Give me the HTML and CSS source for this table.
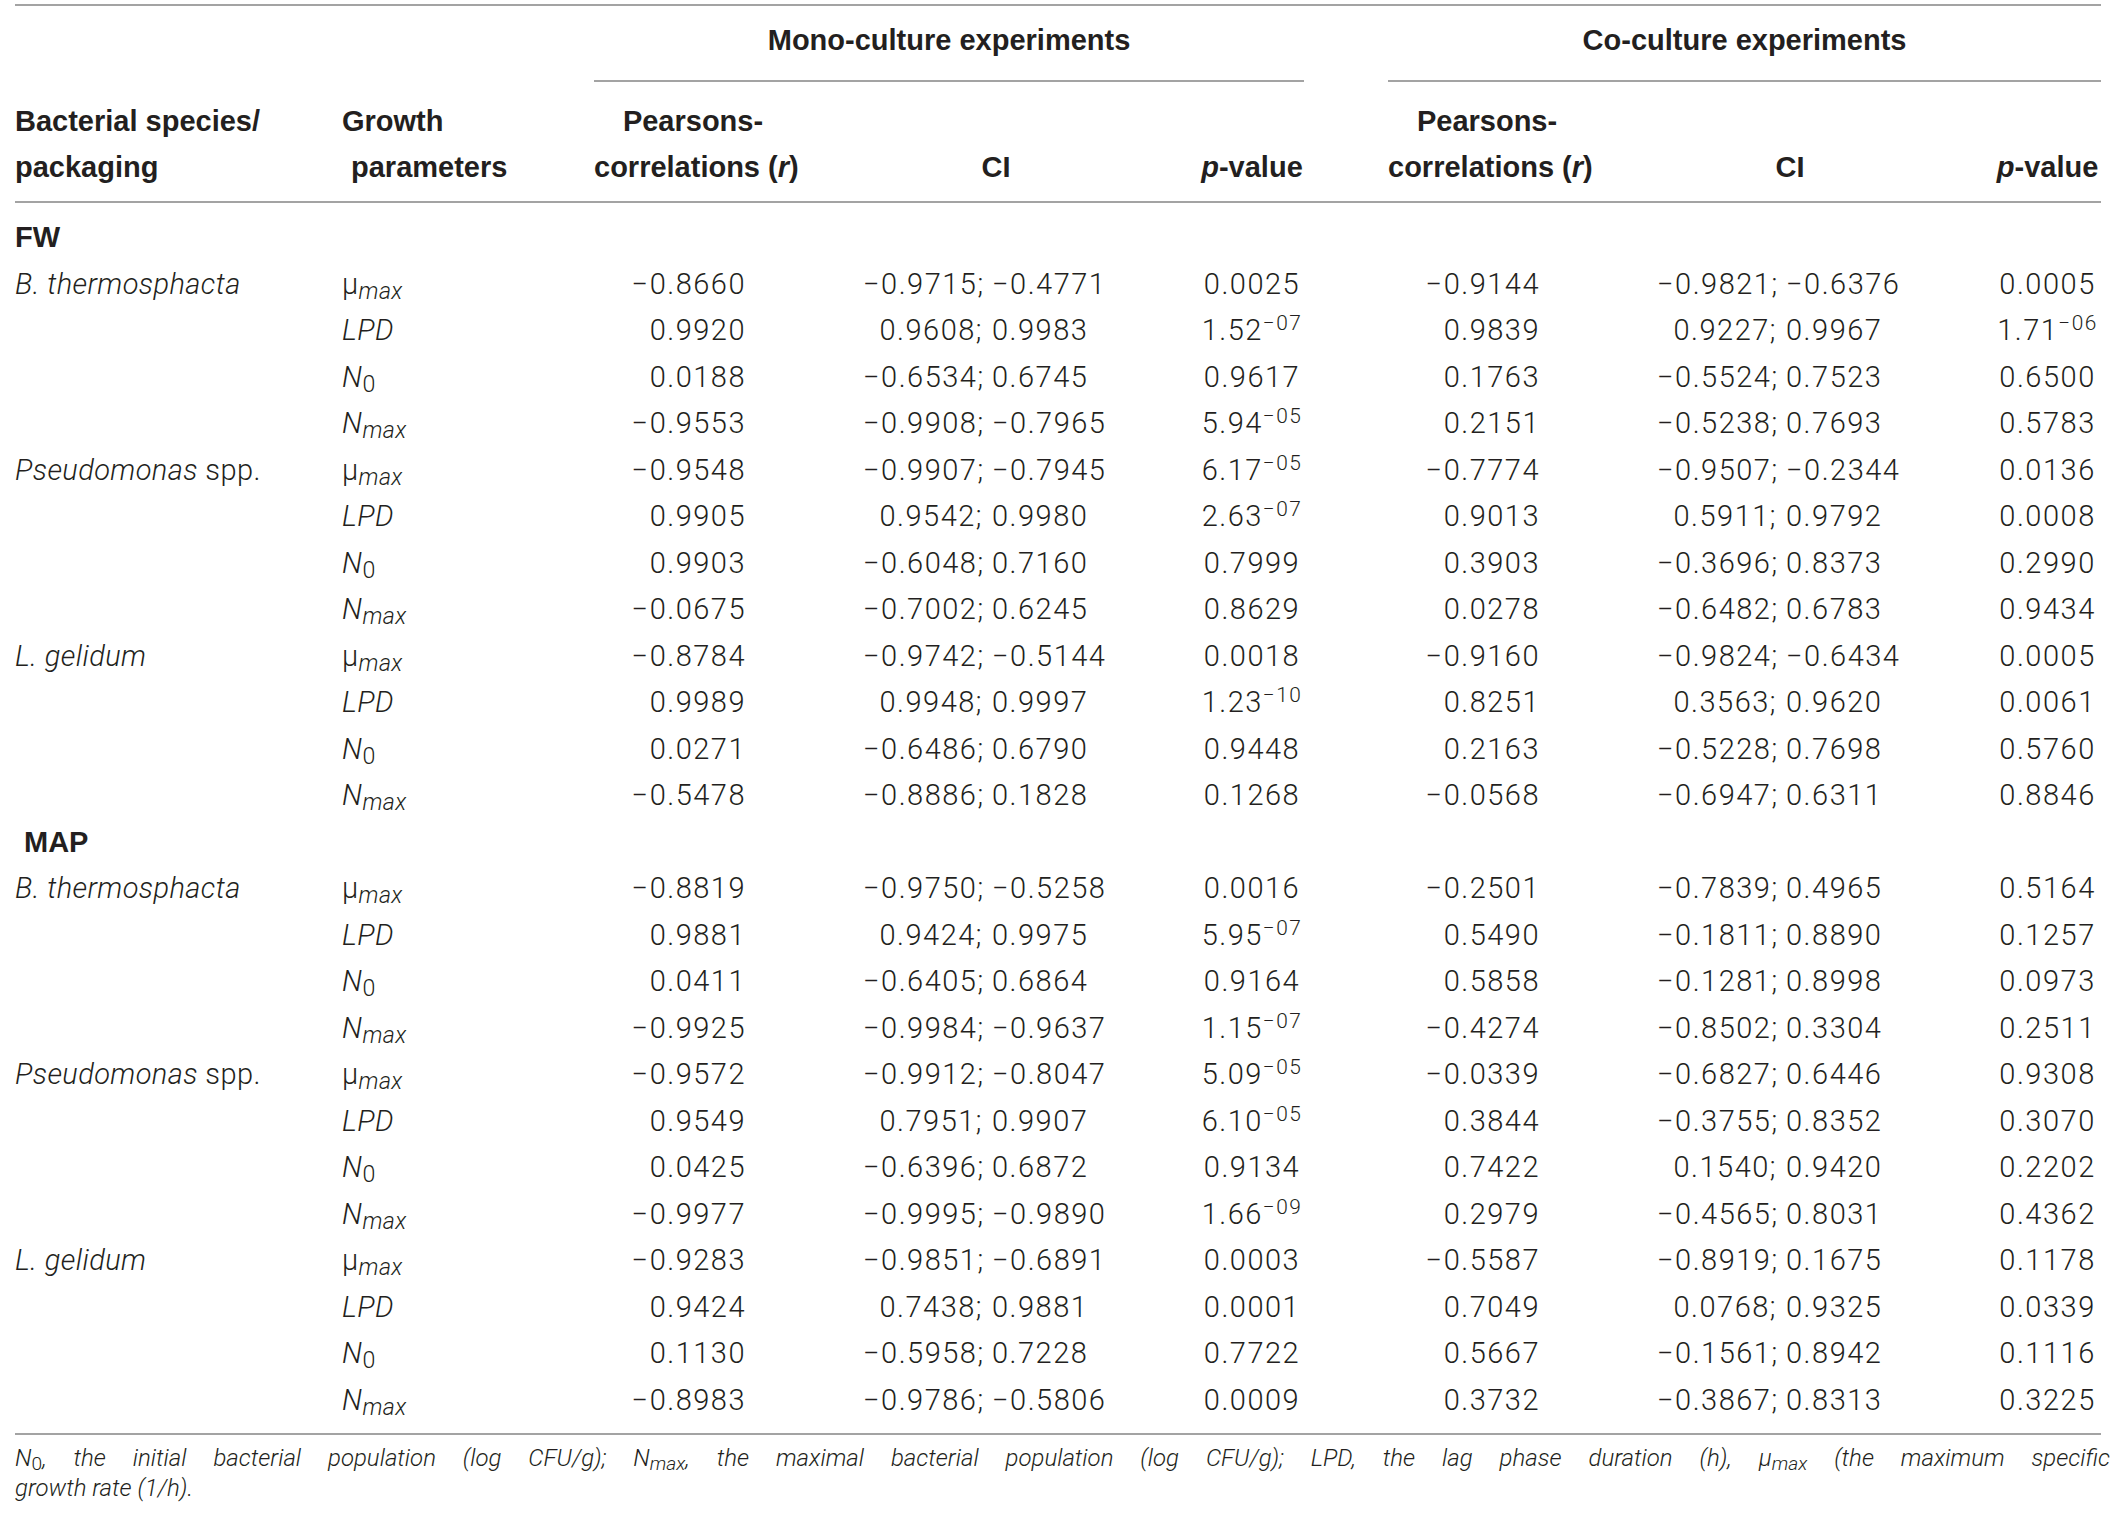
FILE: index.html
```html
<!DOCTYPE html>
<html lang="en">
<head>
<meta charset="utf-8">
<title>Pearson correlations</title>
<link rel="stylesheet" href="styles.css">
</head>
<body>
<div class="wrap">
<table class="tbl">
<colgroup>
<col class="w-sp"><col class="w-gp"><col class="w-r"><col class="w-ci"><col class="w-p1"><col class="w-gap"><col class="w-r"><col class="w-ci"><col class="w-p2">
</colgroup>
<thead>
<tr class="h1">
<th rowspan="2" class="hsp">Bacterial species/<br>packaging</th>
<th rowspan="2" class="hgp">Growth<br><span class="ind">parameters</span></th>
<th colspan="3" class="grp">Mono-culture experiments</th>
<th rowspan="2" class="hgap"></th>
<th colspan="3" class="grp">Co-culture experiments</th>
</tr>
<tr class="h2">
<th class="hc">Pearsons-<br>correlations (<i>r</i>)</th>
<th class="hc">CI</th>
<th class="hc"><i>p</i>-value</th>
<th class="hc">Pearsons-<br>correlations (<i>r</i>)</th>
<th class="hc">CI</th>
<th class="hc"><i>p</i>-value</th>
</tr>
</thead>
<tbody>
<tr class="sec first"><td class="secname" colspan="9">FW</td></tr>
<tr><td class="sp"><i>B. thermosphacta</i></td><td class="gp">μ<sub><i>max</i></sub></td><td class="r">−0.8660</td><td class="ci"><span class="cl">−0.9715;</span><span class="cr">−0.4771</span></td><td class="p">0.0025</td><td></td><td class="r">−0.9144</td><td class="ci"><span class="cl">−0.9821;</span><span class="cr">−0.6376</span></td><td class="p">0.0005</td></tr>
<tr><td class="sp"></td><td class="gp"><i>LPD</i></td><td class="r">0.9920</td><td class="ci"><span class="cl">0.9608;</span><span class="cr">0.9983</span></td><td class="p">1.52<sup>−07</sup></td><td></td><td class="r">0.9839</td><td class="ci"><span class="cl">0.9227;</span><span class="cr">0.9967</span></td><td class="p">1.71<sup>−06</sup></td></tr>
<tr><td class="sp"></td><td class="gp"><i>N</i><sub>0</sub></td><td class="r">0.0188</td><td class="ci"><span class="cl">−0.6534;</span><span class="cr">0.6745</span></td><td class="p">0.9617</td><td></td><td class="r">0.1763</td><td class="ci"><span class="cl">−0.5524;</span><span class="cr">0.7523</span></td><td class="p">0.6500</td></tr>
<tr><td class="sp"></td><td class="gp"><i>N<sub>max</sub></i></td><td class="r">−0.9553</td><td class="ci"><span class="cl">−0.9908;</span><span class="cr">−0.7965</span></td><td class="p">5.94<sup>−05</sup></td><td></td><td class="r">0.2151</td><td class="ci"><span class="cl">−0.5238;</span><span class="cr">0.7693</span></td><td class="p">0.5783</td></tr>
<tr><td class="sp"><i>Pseudomonas</i> spp.</td><td class="gp">μ<sub><i>max</i></sub></td><td class="r">−0.9548</td><td class="ci"><span class="cl">−0.9907;</span><span class="cr">−0.7945</span></td><td class="p">6.17<sup>−05</sup></td><td></td><td class="r">−0.7774</td><td class="ci"><span class="cl">−0.9507;</span><span class="cr">−0.2344</span></td><td class="p">0.0136</td></tr>
<tr><td class="sp"></td><td class="gp"><i>LPD</i></td><td class="r">0.9905</td><td class="ci"><span class="cl">0.9542;</span><span class="cr">0.9980</span></td><td class="p">2.63<sup>−07</sup></td><td></td><td class="r">0.9013</td><td class="ci"><span class="cl">0.5911;</span><span class="cr">0.9792</span></td><td class="p">0.0008</td></tr>
<tr><td class="sp"></td><td class="gp"><i>N</i><sub>0</sub></td><td class="r">0.9903</td><td class="ci"><span class="cl">−0.6048;</span><span class="cr">0.7160</span></td><td class="p">0.7999</td><td></td><td class="r">0.3903</td><td class="ci"><span class="cl">−0.3696;</span><span class="cr">0.8373</span></td><td class="p">0.2990</td></tr>
<tr><td class="sp"></td><td class="gp"><i>N<sub>max</sub></i></td><td class="r">−0.0675</td><td class="ci"><span class="cl">−0.7002;</span><span class="cr">0.6245</span></td><td class="p">0.8629</td><td></td><td class="r">0.0278</td><td class="ci"><span class="cl">−0.6482;</span><span class="cr">0.6783</span></td><td class="p">0.9434</td></tr>
<tr><td class="sp"><i>L. gelidum</i></td><td class="gp">μ<sub><i>max</i></sub></td><td class="r">−0.8784</td><td class="ci"><span class="cl">−0.9742;</span><span class="cr">−0.5144</span></td><td class="p">0.0018</td><td></td><td class="r">−0.9160</td><td class="ci"><span class="cl">−0.9824;</span><span class="cr">−0.6434</span></td><td class="p">0.0005</td></tr>
<tr><td class="sp"></td><td class="gp"><i>LPD</i></td><td class="r">0.9989</td><td class="ci"><span class="cl">0.9948;</span><span class="cr">0.9997</span></td><td class="p">1.23<sup>−10</sup></td><td></td><td class="r">0.8251</td><td class="ci"><span class="cl">0.3563;</span><span class="cr">0.9620</span></td><td class="p">0.0061</td></tr>
<tr><td class="sp"></td><td class="gp"><i>N</i><sub>0</sub></td><td class="r">0.0271</td><td class="ci"><span class="cl">−0.6486;</span><span class="cr">0.6790</span></td><td class="p">0.9448</td><td></td><td class="r">0.2163</td><td class="ci"><span class="cl">−0.5228;</span><span class="cr">0.7698</span></td><td class="p">0.5760</td></tr>
<tr><td class="sp"></td><td class="gp"><i>N<sub>max</sub></i></td><td class="r">−0.5478</td><td class="ci"><span class="cl">−0.8886;</span><span class="cr">0.1828</span></td><td class="p">0.1268</td><td></td><td class="r">−0.0568</td><td class="ci"><span class="cl">−0.6947;</span><span class="cr">0.6311</span></td><td class="p">0.8846</td></tr>
<tr class="sec"><td class="secname map" colspan="9">MAP</td></tr>
<tr><td class="sp"><i>B. thermosphacta</i></td><td class="gp">μ<sub><i>max</i></sub></td><td class="r">−0.8819</td><td class="ci"><span class="cl">−0.9750;</span><span class="cr">−0.5258</span></td><td class="p">0.0016</td><td></td><td class="r">−0.2501</td><td class="ci"><span class="cl">−0.7839;</span><span class="cr">0.4965</span></td><td class="p">0.5164</td></tr>
<tr><td class="sp"></td><td class="gp"><i>LPD</i></td><td class="r">0.9881</td><td class="ci"><span class="cl">0.9424;</span><span class="cr">0.9975</span></td><td class="p">5.95<sup>−07</sup></td><td></td><td class="r">0.5490</td><td class="ci"><span class="cl">−0.1811;</span><span class="cr">0.8890</span></td><td class="p">0.1257</td></tr>
<tr><td class="sp"></td><td class="gp"><i>N</i><sub>0</sub></td><td class="r">0.0411</td><td class="ci"><span class="cl">−0.6405;</span><span class="cr">0.6864</span></td><td class="p">0.9164</td><td></td><td class="r">0.5858</td><td class="ci"><span class="cl">−0.1281;</span><span class="cr">0.8998</span></td><td class="p">0.0973</td></tr>
<tr><td class="sp"></td><td class="gp"><i>N<sub>max</sub></i></td><td class="r">−0.9925</td><td class="ci"><span class="cl">−0.9984;</span><span class="cr">−0.9637</span></td><td class="p">1.15<sup>−07</sup></td><td></td><td class="r">−0.4274</td><td class="ci"><span class="cl">−0.8502;</span><span class="cr">0.3304</span></td><td class="p">0.2511</td></tr>
<tr><td class="sp"><i>Pseudomonas</i> spp.</td><td class="gp">μ<sub><i>max</i></sub></td><td class="r">−0.9572</td><td class="ci"><span class="cl">−0.9912;</span><span class="cr">−0.8047</span></td><td class="p">5.09<sup>−05</sup></td><td></td><td class="r">−0.0339</td><td class="ci"><span class="cl">−0.6827;</span><span class="cr">0.6446</span></td><td class="p">0.9308</td></tr>
<tr><td class="sp"></td><td class="gp"><i>LPD</i></td><td class="r">0.9549</td><td class="ci"><span class="cl">0.7951;</span><span class="cr">0.9907</span></td><td class="p">6.10<sup>−05</sup></td><td></td><td class="r">0.3844</td><td class="ci"><span class="cl">−0.3755;</span><span class="cr">0.8352</span></td><td class="p">0.3070</td></tr>
<tr><td class="sp"></td><td class="gp"><i>N</i><sub>0</sub></td><td class="r">0.0425</td><td class="ci"><span class="cl">−0.6396;</span><span class="cr">0.6872</span></td><td class="p">0.9134</td><td></td><td class="r">0.7422</td><td class="ci"><span class="cl">0.1540;</span><span class="cr">0.9420</span></td><td class="p">0.2202</td></tr>
<tr><td class="sp"></td><td class="gp"><i>N<sub>max</sub></i></td><td class="r">−0.9977</td><td class="ci"><span class="cl">−0.9995;</span><span class="cr">−0.9890</span></td><td class="p">1.66<sup>−09</sup></td><td></td><td class="r">0.2979</td><td class="ci"><span class="cl">−0.4565;</span><span class="cr">0.8031</span></td><td class="p">0.4362</td></tr>
<tr><td class="sp"><i>L. gelidum</i></td><td class="gp">μ<sub><i>max</i></sub></td><td class="r">−0.9283</td><td class="ci"><span class="cl">−0.9851;</span><span class="cr">−0.6891</span></td><td class="p">0.0003</td><td></td><td class="r">−0.5587</td><td class="ci"><span class="cl">−0.8919;</span><span class="cr">0.1675</span></td><td class="p">0.1178</td></tr>
<tr><td class="sp"></td><td class="gp"><i>LPD</i></td><td class="r">0.9424</td><td class="ci"><span class="cl">0.7438;</span><span class="cr">0.9881</span></td><td class="p">0.0001</td><td></td><td class="r">0.7049</td><td class="ci"><span class="cl">0.0768;</span><span class="cr">0.9325</span></td><td class="p">0.0339</td></tr>
<tr><td class="sp"></td><td class="gp"><i>N</i><sub>0</sub></td><td class="r">0.1130</td><td class="ci"><span class="cl">−0.5958;</span><span class="cr">0.7228</span></td><td class="p">0.7722</td><td></td><td class="r">0.5667</td><td class="ci"><span class="cl">−0.1561;</span><span class="cr">0.8942</span></td><td class="p">0.1116</td></tr>
<tr class="last"><td class="sp"></td><td class="gp"><i>N<sub>max</sub></i></td><td class="r">−0.8983</td><td class="ci"><span class="cl">−0.9786;</span><span class="cr">−0.5806</span></td><td class="p">0.0009</td><td></td><td class="r">0.3732</td><td class="ci"><span class="cl">−0.3867;</span><span class="cr">0.8313</span></td><td class="p">0.3225</td></tr>
</tbody>
</table>
<p class="note"><span class="note-l1"><i>N</i><sub>0</sub><i>, the initial bacterial population (log CFU/g); N<sub>max</sub>, the maximal bacterial population (log CFU/g); LPD, the lag phase duration (h), μ<sub>max</sub> (the maximum specific</i></span><span class="note-l2"><i>growth rate (1/h).</i></span></p>
</div>
</body>
</html>
```

FILE: styles.css
```css
html, body {
  margin: 0;
  padding: 0;
  background: #ffffff;
}

body {
  color: #231f20;
  font-family: Roboto, "Liberation Sans", Arial, sans-serif;
  font-weight: 300;
}

.wrap {
  padding: 4px 0 0 15px;
  width: 2095px;
}

.tbl {
  border-collapse: separate;
  border-spacing: 0;
  table-layout: fixed;
  width: 2086px;
  font-size: 29px;
}

.w-sp { width: 327px; }
.w-gp { width: 252px; }
.w-r { width: 198px; }
.w-ci { width: 408px; }
.w-p1 { width: 104px; }
.w-gap { width: 84px; }
.w-p2 { width: 107px; }

.tbl th {
  font-family: "Liberation Sans", Arial, sans-serif;
  font-weight: 700;
  line-height: 46px;
  padding: 0;
  white-space: nowrap;
}

.tbl i {
  font-style: italic;
}

.h1 th {
  border-top: 2px solid #a3a3a3;
}

.hsp, .hgp, .hgap {
  text-align: left;
  vertical-align: bottom;
  padding-bottom: 11px !important;
  border-bottom: 2px solid #a3a3a3;
}

.hgp .ind {
  padding-left: 9px;
}

.grp {
  text-align: center;
  vertical-align: top;
  padding: 11px 0 17px !important;
  border-bottom: 2px solid #a3a3a3;
}

.h2 th {
  padding: 16px 0 11px !important;
  border-bottom: 2px solid #a3a3a3;
  vertical-align: bottom;
  text-align: center;
}

.tbl td {
  padding: 0;
  line-height: 46.5px;
  height: 46.5px;
  white-space: nowrap;
  vertical-align: baseline;
  letter-spacing: 1.5px;
}

.sec.first td {
  padding-top: 11px;
}

.tbl td.secname {
  font-family: "Liberation Sans", Arial, sans-serif;
  font-weight: 700;
  text-align: left;
  letter-spacing: 0;
}

.tbl td.secname.map {
  padding-left: 9px;
}

.tbl td.sp,
.tbl td.gp {
  text-align: left;
  letter-spacing: 0.4px;
}

.tbl td.r {
  text-align: right;
  padding-right: 46px;
}

.tbl td.ci {
  text-align: left;
  padding-left: 71px;
}

.cl {
  display: inline-block;
  width: 120px;
  text-align: right;
}

.cr {
  padding-left: 9px;
}

.tbl td.p {
  text-align: center;
}

.tbl tr.last td {
  padding-bottom: 10px;
  border-bottom: 2px solid #a3a3a3;
}

sub {
  font-size: 0.8em;
  vertical-align: -0.2em;
  line-height: 0;
}

sup {
  font-size: 0.72em;
  vertical-align: 0.5em;
  line-height: 0;
}

.note {
  margin: 8px 0 0;
  width: 2095px;
  font-size: 24px;
  line-height: 30px;
}

.note-l1 {
  display: block;
  text-align: justify;
  text-align-last: justify;
}

.note-l2 {
  display: block;
  text-align: left;
}
```
